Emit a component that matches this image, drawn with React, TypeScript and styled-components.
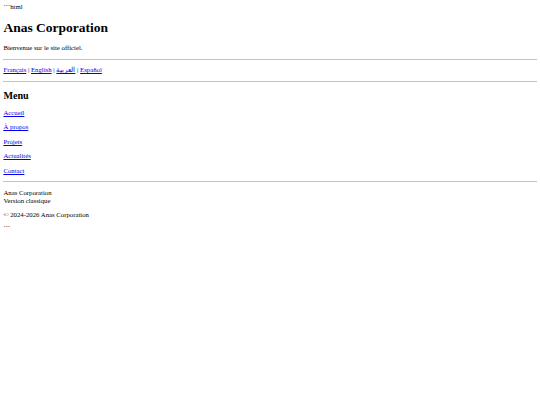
import React from "react";
import styled, { createGlobalStyle } from "styled-components";

// the page is a plain, unstyled document drawn at a small scale
const GlobalStyle = createGlobalStyle`
  body {
    margin: 3.4px;
    background: #fff;
    color: #000;
    font-family: "Liberation Serif", "Times New Roman", serif;
    font-size: 6.75px;
    line-height: 7.75px;
  }
`;

const Fence = styled.div`
  line-height: 7.75px;
`;

const Title = styled.h1`
  font-family: "Liberation Serif", "Times New Roman", serif;
  font-size: 13.5px;
  line-height: 15.5px;
  font-weight: 700;
  margin: 8.6px 0 9px;
`;

const Heading = styled.h2`
  font-family: "Liberation Serif", "Times New Roman", serif;
  font-size: 10.125px;
  line-height: 11.6px;
  font-weight: 700;
  margin: 8.4px 0 7px;
`;

const Para = styled.p<{ $tail?: number }>`
  margin: 6.75px 0 ${(p) => p.$tail ?? 6.75}px;
`;

const Rule = styled.hr`
  margin: 6.75px 0;
  border: none;
  border-top: 1px solid #c4c4c4;
  height: 0;
`;

const Link = styled.a`
  color: #0000ee;
  text-decoration: underline;
`;

// block flow so the paragraph margins collapse between links
const Nav = styled.nav`
  display: block;
`;

const languages = [
  { label: "Français", lang: "fr" },
  { label: "English", lang: "en" },
  { label: "العربية", lang: "ar" },
  { label: "Español", lang: "es" },
];

const menu = ["Accueil", "À propos", "Projets", "Actualités", "Contact"];

export default function App() {
  return (
    <>
      <GlobalStyle />
      <Fence>```html</Fence>
      <Title>Anas Corporation</Title>
      <Para>Bienvenue sur le site officiel.</Para>
      <Rule />
      <Para>
        {languages.map((l, i) => (
          <React.Fragment key={l.lang}>
            {i > 0 && " | "}
            <Link href="#" lang={l.lang}>
              {l.label}
            </Link>
          </React.Fragment>
        ))}
      </Para>
      <Rule />
      <Heading>Menu</Heading>
      <Nav>
        {menu.map((m) => (
          <Para key={m}>
            <Link href="#">{m}</Link>
          </Para>
        ))}
      </Nav>
      <Rule />
      <footer>
        <Para>
          Anas Corporation
          <br />
          Version classique
        </Para>
        <Para $tail={4.5}>© 2024-2026 Anas Corporation</Para>
      </footer>
      <Fence>```</Fence>
    </>
  );
}
